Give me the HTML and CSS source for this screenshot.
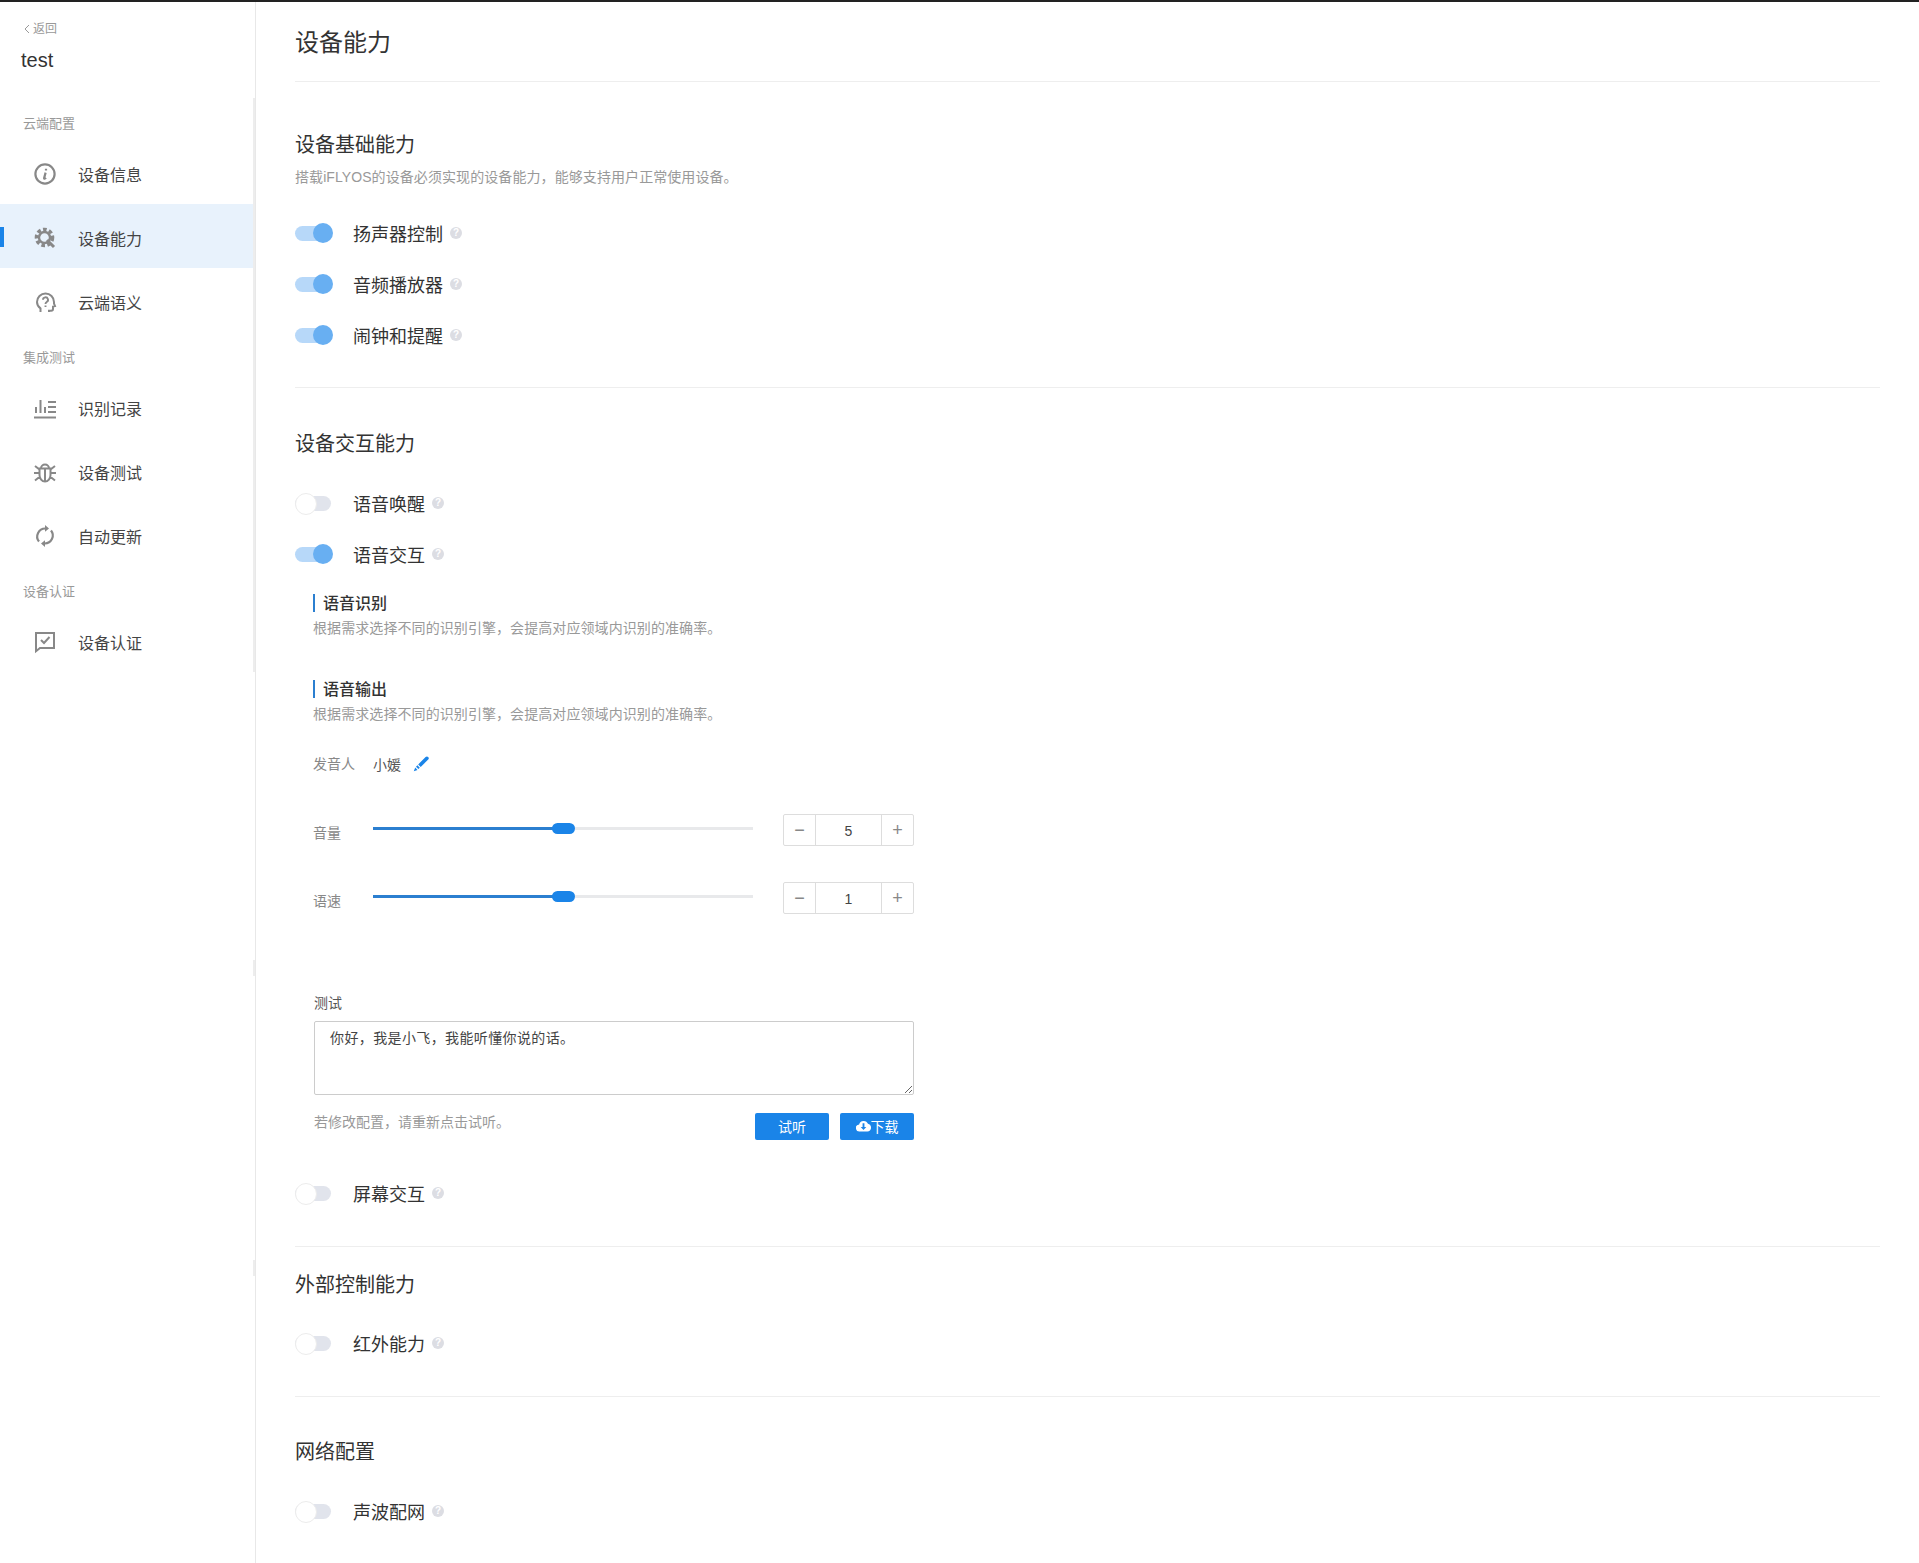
FILE: index.html
```html
<!DOCTYPE html>
<html lang="en">

<head>
    <meta charset="UTF-8">
    <meta name="viewport" content="width=device-width, initial-scale=1.0">
    <title>设备能力</title>
    <link rel="stylesheet" href="styles.css">
</head>

<body>
    <div class="app">
        <aside class="sidebar">
            <div class="back">
                <svg class="back-arrow" viewBox="0 0 6 10" width="6" height="10"><path d="M5 1 1 5l4 4" fill="none" stroke="#999" stroke-width="1"/></svg>
                返回
            </div>
            <div class="product">test</div>
            <nav class="menu">
                <div class="group">云端配置</div>
                <a class="item">
                    <svg class="icon" viewBox="0 0 24 24"><circle cx="12" cy="12" r="9.600" fill="none" stroke-width="2.200"/><path d="M13 6.800v1.800M12.600 10.600l-1.500 5.600c0 .6.800.6 1.900-.5" fill="none" stroke-width="2.200"/></svg>
                    设备信息
                </a>
                <a class="item active">
                    <svg class="icon" viewBox="0 0 24 24"><circle cx="11.500" cy="11.500" r="8" fill="none" stroke-width="3.600" stroke-dasharray="3.600 2.400"/><circle cx="11.500" cy="11.500" r="5.500" fill="none" stroke-width="2.400"/><path d="m14 14 7 7" fill="none" stroke-width="3"/></svg>
                    设备能力
                </a>
                <a class="item">
                    <svg class="icon" viewBox="0 0 24 24"><path d="M7.500 22v-3.600C5.300 16.800 4 14.600 4 12a8.500 8.500 0 0 1 17 0v1.500l1 2.500-2 .6V19a1.800 1.800 0 0 1-1.800 1.800H16V22" fill="none" stroke-width="2"/><path d="M10 9.800a2.500 2.500 0 1 1 3.700 2.200c-.9.500-1.200 1-1.200 2M12.500 15.500v1.500" fill="none" stroke-width="1.900"/></svg>
                    云端语义
                </a>
                <div class="group">集成测试</div>
                <a class="item">
                    <svg class="icon" viewBox="0 0 24 24"><path d="M1 21.500h22M3 11v6M7.500 4v13M12 11v6M15 6h8M15 11h8M15 16h8" fill="none" stroke-width="2"/></svg>
                    识别记录
                </a>
                <a class="item">
                    <svg class="icon" viewBox="0 0 24 24"><path d="M6.500 8.500h11v6.500a5.500 6.500 0 0 1-11 0zM8 8.500a4 4 0 0 1 8 0M12 8.500V21M1 13h5.500M17.500 13H23M2 6l4.500 3.500M22 6l-4.500 3.500M2 20.500l5-4M22 20.500l-5-4" fill="none" stroke-width="2"/></svg>
                    设备测试
                </a>
                <a class="item">
                    <svg class="icon" viewBox="0 0 24 24"><path d="M6 17.500A8 8 0 0 1 12.500 4.500M18 6.500a8 8 0 0 1-6.500 13" fill="none" stroke-width="2.200"/><path d="m12 1 4 3.500-4 3.200zM12 23l-4-3.500 4-3.200z" stroke="none"/></svg>
                    自动更新
                </a>
                <div class="group">设备认证</div>
                <a class="item">
                    <svg class="icon" viewBox="0 0 24 24"><path d="M3 3h18v15H7l-4 3.200z" fill="none" stroke-width="2"/><path d="m8 10 3 3 5.500-6" fill="none" stroke-width="2"/></svg>
                    设备认证
                </a>
            </nav>
            <span class="tick tick-a"></span>
            <span class="tick tick-b"></span>
        </aside>

        <main class="content">
            <h1 class="page-title">设备能力</h1>

            <section class="section first">
                <h2 class="section-title">设备基础能力</h2>
                <p class="section-desc">搭载iFLYOS的设备必须实现的设备能力，能够支持用户正常使用设备。</p>
                <div class="rows">
                    <div class="row"><span class="switch on"></span><span class="row-label">扬声器控制</span><span class="help">?</span></div>
                    <div class="row"><span class="switch on"></span><span class="row-label">音频播放器</span><span class="help">?</span></div>
                    <div class="row"><span class="switch on"></span><span class="row-label">闹钟和提醒</span><span class="help">?</span></div>
                </div>
            </section>

            <section class="section interact">
                <h2 class="section-title">设备交互能力</h2>
                <div class="rows">
                    <div class="row"><span class="switch"></span><span class="row-label">语音唤醒</span><span class="help">?</span></div>
                    <div class="row"><span class="switch on"></span><span class="row-label">语音交互</span><span class="help">?</span></div>
                </div>

                <div class="voice">
                    <h3 class="sub-title">语音识别</h3>
                    <p class="sub-desc">根据需求选择不同的识别引擎，会提高对应领域内识别的准确率。</p>
                    <h3 class="sub-title second">语音输出</h3>
                    <p class="sub-desc">根据需求选择不同的识别引擎，会提高对应领域内识别的准确率。</p>

                    <div class="speaker">
                        <span class="field-label">发音人</span>
                        <span class="speaker-name">小媛</span>
                        <svg class="pencil" viewBox="0 0 16 16" width="16" height="16"><path d="M15.200 1c-.8-.8-1.800-.8-2.600 0L5.200 8.400l2.500 2.500 7.500-7.300c.8-.8.800-1.800 0-2.600zM4.400 9.300 3 10.700l2.400 2.400 1.400-1.400zM2.200 11.600.8 15.300l3.700-1.400z" fill="#1a84e8"/></svg>
                    </div>

                    <div class="control">
                        <span class="field-label">音量</span>
                        <div class="slider"><div class="slider-fill" style="width: 50%"></div><span class="slider-handle" style="left: 50%"></span></div>
                        <div class="stepper"><span class="step">−</span><span class="step-value">5</span><span class="step">+</span></div>
                    </div>
                    <div class="control next">
                        <span class="field-label">语速</span>
                        <div class="slider"><div class="slider-fill" style="width: 50%"></div><span class="slider-handle" style="left: 50%"></span></div>
                        <div class="stepper"><span class="step">−</span><span class="step-value">1</span><span class="step">+</span></div>
                    </div>

                    <div class="test">
                        <label class="test-label" for="testText">测试</label>
                        <textarea class="test-text" id="testText">你好，我是小飞，我能听懂你说的话。</textarea>
                        <div class="test-foot">
                            <span class="test-hint">若修改配置，请重新点击试听。</span>
                            <button class="btn" type="button"><span>试听</span></button>
                            <button class="btn" type="button">
                                <svg viewBox="0 0 16 14" width="15" height="13"><path d="M12.800 5.200A5 5 0 0 0 3.300 5.800 3.800 3.800 0 0 0 4 13.500h8.200a4.200 4.200 0 0 0 .6-8.300z" fill="#fff"/><path d="M7 4.500h2v4h2l-3 3.300-3-3.300h2z" fill="#1a84e8"/></svg><span>下载</span>
                            </button>
                        </div>
                    </div>
                </div>

                <div class="rows tight">
                    <div class="row"><span class="switch"></span><span class="row-label">屏幕交互</span><span class="help">?</span></div>
                </div>
            </section>

            <section class="section compact">
                <h2 class="section-title">外部控制能力</h2>
                <div class="rows">
                    <div class="row"><span class="switch"></span><span class="row-label">红外能力</span><span class="help">?</span></div>
                </div>
            </section>

            <section class="section last">
                <h2 class="section-title">网络配置</h2>
                <div class="rows">
                    <div class="row"><span class="switch"></span><span class="row-label">声波配网</span><span class="help">?</span></div>
                </div>
            </section>
        </main>
    </div>
</body>

</html>
```

FILE: styles.css
```css
* {
    box-sizing: border-box;
}

body {
    margin: 0;
    background-color: #fff;
    color: #333;
    font-family: "Liberation Sans", "Noto Sans CJK SC", sans-serif;
    font-size: 14px;
}

.app {
    display: flex;
    height: 1563px;
    overflow: hidden;
    border-top: 2px solid #222;
}

/* sidebar */
.sidebar {
    position: relative;
    flex: 0 0 256px;
    border-right: 1px solid #e8e8e8;
}

.back {
    display: flex;
    align-items: center;
    gap: 3px;
    height: 20px;
    margin-top: 17px;
    padding-left: 24px;
    color: #999;
    font-size: 12px;
    line-height: 20px;
}

.product {
    height: 24px;
    margin-top: 9px;
    padding-left: 21px;
    color: #333;
    font-size: 20px;
    line-height: 24px;
}

.menu {
    width: 255px;
    height: 574px;
    margin-top: 26px;
    border-right: 2px solid #ededed;
}

.group {
    height: 42px;
    padding: 16px 0 0 23px;
    color: #999;
    font-size: 13px;
    line-height: 20px;
}

.item {
    position: relative;
    display: flex;
    align-items: center;
    gap: 21px;
    height: 64px;
    padding: 4px 0 0 33px;
    color: #444;
    font-size: 16px;
}

.item.active {
    background-color: #e8f2fc;
}

.item.active::before {
    content: "";
    position: absolute;
    left: 0;
    top: 23px;
    width: 4px;
    height: 20px;
    background-color: #1a84e8;
}

.icon {
    width: 24px;
    height: 24px;
    fill: #888;
    stroke: #888;
}

.tick {
    position: absolute;
    right: 0;
    width: 2px;
    height: 16px;
    background-color: #ededed;
}

.tick-a {
    top: 958px;
}

.tick-b {
    top: 1258px;
}

/* content */
.content {
    flex: 1;
    padding: 0 39px;
}

.page-title {
    height: 80px;
    margin: 0;
    padding-top: 21px;
    border-bottom: 1px solid #eee;
    color: #333;
    font-size: 24px;
    font-weight: 400;
    line-height: 40px;
}

.section {
    padding: 42px 0 26px;
    border-bottom: 1px solid #eee;
}

.section.first {
    padding-top: 49px;
}

.section.interact {
    padding-bottom: 27px;
}

.section.compact {
    padding: 24px 0 27px;
}

.section.last {
    padding-top: 41px;
    border-bottom: 0;
}

.section-title {
    margin: 0;
    color: #333;
    font-size: 20px;
    font-weight: 400;
    line-height: 28px;
}

.section-desc {
    margin: 8px 0 0;
    color: #999;
    font-size: 14px;
    letter-spacing: .08px;
    line-height: 20px;
}

.rows {
    margin-top: 19px;
}

.first .rows {
    margin-top: 21px;
}

.interact .rows {
    margin-top: 20px;
}

.interact .rows.tight {
    margin-top: 28px;
}

.last .rows {
    margin-top: 20px;
}

.row {
    display: flex;
    align-items: center;
    height: 51px;
}

.switch {
    position: relative;
    width: 36px;
    height: 15px;
    border-radius: 8px;
    background-color: #e1e4ec;
}

.switch::after {
    content: "";
    position: absolute;
    left: 0;
    top: -3px;
    width: 20px;
    height: 20px;
    border: 1px solid #ececec;
    border-radius: 50%;
    background-color: #fff;
}

.switch.on {
    background-color: #b7d8f9;
}

.switch.on::after {
    left: 18px;
    border: 0;
    background-color: #68aff2;
}

.row-label {
    margin: 0 0 2px 22px;
    color: #333;
    font-size: 18px;
}

.help {
    width: 12px;
    height: 12px;
    margin: 0 0 2px 7px;
    border-radius: 50%;
    background-color: #dcdde3;
    color: #fff;
    font-size: 10px;
    font-weight: 700;
    line-height: 12px;
    text-align: center;
}

/* voice settings */
.voice {
    width: 601px;
    margin-left: 18px;
}

.sub-title {
    margin: 12px 0 0;
    padding-left: 10px;
    color: #333;
    font-size: 16px;
    font-weight: 500;
    line-height: 24px;
    background: linear-gradient(#2b7fd0, #2b7fd0) 0 2px / 2px 18px no-repeat;
}

.sub-title.second {
    margin-top: 40px;
}

.sub-desc {
    margin: 2px 0 0;
    color: #999;
    font-size: 14px;
    letter-spacing: .08px;
    line-height: 20px;
}

.speaker {
    display: flex;
    align-items: center;
    margin-top: 30px;
    height: 20px;
}

.field-label {
    flex: 0 0 60px;
    color: #888;
    font-size: 14px;
}

.speaker .field-label {
    margin-bottom: 2px;
}

.speaker-name {
    color: #555;
}

.pencil {
    margin-left: 12px;
}

.control {
    display: flex;
    align-items: flex-start;
    width: 601px;
    height: 32px;
    margin-top: 40px;
}

.control.next {
    margin-top: 36px;
}

.control .field-label {
    line-height: 20px;
    padding-top: 9px;
}

.slider {
    position: relative;
    width: 380px;
    height: 3px;
    margin-top: 13px;
    background-color: #e8e9eb;
}

.slider-fill {
    height: 3px;
    background-color: #2b7fd0;
}

.slider-handle {
    position: absolute;
    top: -4px;
    width: 23px;
    height: 11px;
    margin-left: -11px;
    border-radius: 6px;
    background-color: #1a84e8;
}

.stepper {
    display: flex;
    width: 131px;
    height: 32px;
    margin-left: 30px;
    border: 1px solid #ddd;
    border-radius: 2px;
    color: #888;
}

.step {
    flex: 0 0 31px;
    font-size: 18px;
    line-height: 31px;
    text-align: center;
}

.step-value {
    flex: 1;
    border-right: 1px solid #ddd;
    border-left: 1px solid #ddd;
    color: #444;
    font-size: 14px;
    line-height: 32px;
    text-align: center;
}

.test {
    margin-top: 79px;
}

.test-label {
    display: block;
    padding-left: 1px;
    color: #555;
    font-size: 14px;
    line-height: 20px;
}

.test-text {
    display: block;
    width: 600px;
    height: 74px;
    margin: 8px 0 0 1px;
    padding: 6px 15px;
    border: 1px solid #ccc;
    border-radius: 2px;
    color: #444;
    font-family: "Liberation Sans", "Noto Sans CJK SC", sans-serif;
    font-size: 14px;
    letter-spacing: .38px;
    line-height: 20px;
}

.test-foot {
    display: flex;
    align-items: flex-start;
    gap: 11px;
    margin-top: 18px;
}

.test-hint {
    flex: 1;
    padding-left: 1px;
    color: #999;
    font-size: 14px;
    line-height: 18px;
}

.btn {
    display: flex;
    align-items: center;
    justify-content: center;
    width: 74px;
    height: 27px;
    padding: 0 0 2px;
    border: 0;
    border-radius: 2px;
    background-color: #1a84e8;
    color: #fff;
    font-family: "Liberation Sans", "Noto Sans CJK SC", sans-serif;
    font-size: 14px;
}
```
